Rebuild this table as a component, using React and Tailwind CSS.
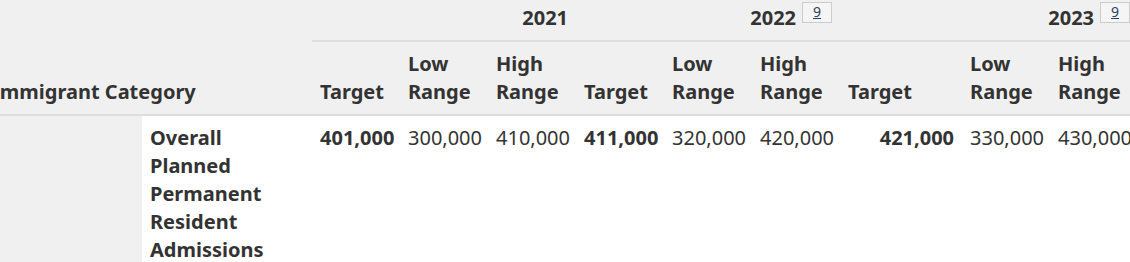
import React from "react";

const years = [
  { year: "2021", fn: null },
  { year: "2022", fn: "9" },
  { year: "2023", fn: "9" },
];

const rows = [
  {
    label: "Overall Planned Permanent Resident Admissions",
    values: [
      ["401,000", "300,000", "410,000"],
      ["411,000", "320,000", "420,000"],
      ["421,000", "330,000", "430,000"],
    ],
  },
];

const FootnoteLink = ({ n }) => (
  <span className="ml-[6px] inline-block -translate-y-[2px] align-top leading-none">
    <a
      href="#fn9"
      className="block border border-[#cccccc] bg-[#f5f5f5] px-[10px] pt-[1px] pb-[3px] text-[14px] leading-[15px] font-normal text-[#284162] underline"
    >
      {n}
    </a>
  </span>
);

const SubHead = ({ children }) => (
  <th className="border-b-2 border-[#dddddd] px-2 pt-2 pb-2 text-left align-bottom font-bold">
    {children}
  </th>
);

export default function App() {
  return (
    <div className="h-[262px] w-[1130px] overflow-hidden bg-white font-['Noto_Sans',sans-serif] text-[20px] leading-[28px] text-[#333333]">
      <table className="-ml-[16px] w-[1154px] table-fixed border-collapse">
        <colgroup>
          <col className="w-[158px]" />
          <col className="w-[170px]" />
          <col className="w-[88px]" />
          <col className="w-[88px]" />
          <col className="w-[88px]" />
          <col className="w-[88px]" />
          <col className="w-[88px]" />
          <col className="w-[88px]" />
          <col className="w-[122px]" />
          <col className="w-[88px]" />
          <col className="w-[88px]" />
        </colgroup>
        <thead className="bg-[#f0f0f0]">
          <tr>
            <th
              colSpan={2}
              rowSpan={2}
              className="border-b-2 border-[#dddddd] px-2 pb-2 text-left align-bottom font-bold whitespace-nowrap"
            >
              Immigrant Category
            </th>
            {years.map((y) => (
              <th
                key={y.year}
                colSpan={3}
                className="border-b-2 border-[#dddddd] px-2 pt-1 pb-2 text-right font-bold whitespace-nowrap"
              >
                {y.year}
                {y.fn && <FootnoteLink n={y.fn} />}
              </th>
            ))}
          </tr>
          <tr>
            {years.map((y) => (
              <React.Fragment key={y.year}>
                <SubHead>Target</SubHead>
                <SubHead>Low Range</SubHead>
                <SubHead>High Range</SubHead>
              </React.Fragment>
            ))}
          </tr>
        </thead>
        <tbody>
          {rows.map((row) => (
            <tr key={row.label}>
              <td className="bg-[#f0f0f0]" />
              <th className="bg-white px-2 pt-2 pb-2 text-left align-top font-bold">
                {row.label}
              </th>
              {row.values.map((set, i) =>
                set.map((v, j) => (
                  <td
                    key={`${i}-${j}`}
                    className={`bg-white px-2 pt-2 text-right align-top ${
                      j === 0 ? "font-bold" : "font-normal"
                    }`}
                  >
                    {v}
                  </td>
                ))
              )}
            </tr>
          ))}
        </tbody>
      </table>
    </div>
  );
}
